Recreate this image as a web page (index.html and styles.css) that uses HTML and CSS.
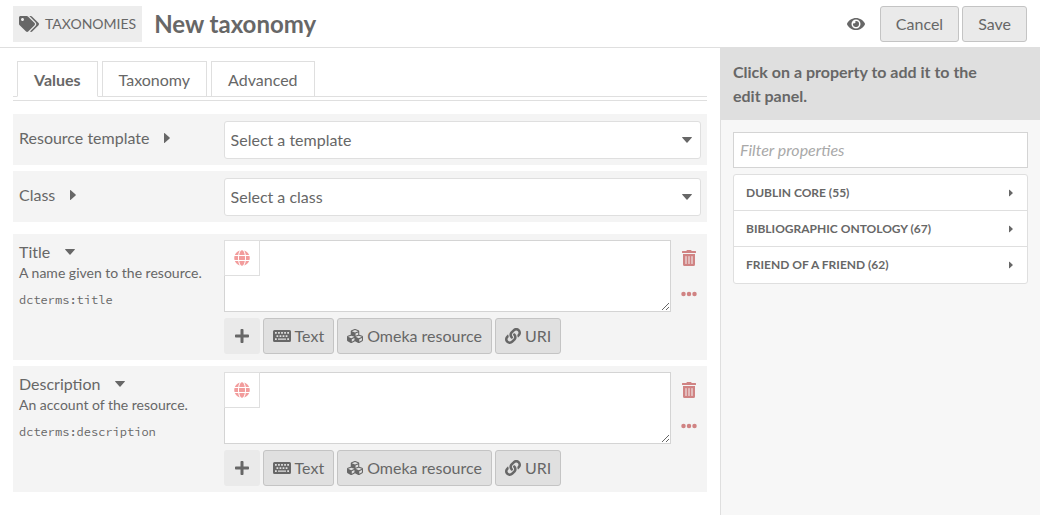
FILE: index.html
```html
<!DOCTYPE html>
<html lang="en">
<head>
<meta charset="utf-8">
<title>New taxonomy</title>
<meta name="viewport" content="width=device-width, initial-scale=1">
<link rel="stylesheet" href="styles.css">
</head>
<body>
<svg class="sprite" aria-hidden="true">
  <symbol id="i-tags" viewBox="0 0 640 512"><path d="M497.941 225.941L286.059 14.059A48 48 0 0 0 252.118 0H48C21.49 0 0 21.49 0 48v204.118a48 48 0 0 0 14.059 33.941l211.882 211.882c18.744 18.745 49.136 18.746 67.882 0l204.118-204.118c18.745-18.745 18.745-49.137 0-67.882zM112 160c-26.51 0-48-21.49-48-48s21.49-48 48-48 48 21.49 48 48-21.49 48-48 48zm513.941 133.823L421.823 497.941c-18.745 18.745-49.137 18.745-67.882 0l-.36-.36L527.64 323.522c16.999-16.999 26.36-39.6 26.36-63.64s-9.362-46.641-26.36-63.64L331.397 0h48.721a48 48 0 0 1 33.941 14.059l211.882 211.882c18.745 18.745 18.745 49.137 0 67.882z"/></symbol>
  <symbol id="i-eye" viewBox="0 0 576 512"><path d="M572.52 241.4C518.29 135.59 410.93 64 288 64S57.68 135.64 3.48 241.41a32.35 32.35 0 0 0 0 29.19C57.71 376.41 165.07 448 288 448s230.32-71.64 284.52-177.41a32.35 32.35 0 0 0 0-29.19zM288 400a144 144 0 1 1 144-144 143.93 143.93 0 0 1-144 144zm0-240a95.31 95.31 0 0 0-25.31 3.79 47.85 47.85 0 0 1-66.9 66.9A95.78 95.78 0 1 0 288 160z"/></symbol>
  <symbol id="i-globe" viewBox="0 0 496 512"><path d="M336.5 160C322 70.7 287.8 8 248 8s-74 62.7-88.5 152h177zM152 256c0 22.2 1.2 43.5 3.3 64h185.3c2.1-20.5 3.3-41.8 3.3-64s-1.2-43.5-3.3-64H155.3c-2.1 20.5-3.3 41.8-3.3 64zm324.7-96c-28.6-67.9-86.5-120.4-158-141.6 24.4 33.8 41.2 84.7 50 141.6h108zM177.2 18.4C105.8 39.6 47.8 92.1 19.3 160h108c8.7-56.9 25.5-107.8 49.9-141.6zM487.4 192H372.7c2.1 21 3.3 42.5 3.3 64s-1.2 43-3.3 64h114.6c5.5-20.5 8.6-41.8 8.6-64s-3.1-43.5-8.5-64zM120 256c0-21.5 1.2-43 3.3-64H8.6C3.2 212.5 0 233.8 0 256s3.2 43.5 8.6 64h114.6c-2-21-3.2-42.5-3.2-64zm39.5 96c14.5 89.3 48.7 152 88.5 152s74-62.7 88.5-152h-177zm159.3 141.6c71.4-21.2 129.4-73.7 158-141.6h-108c-8.8 56.9-25.6 107.8-50 141.6zM19.3 352c28.6 67.9 86.5 120.4 158 141.6-24.4-33.8-41.2-84.7-50-141.6h-108z"/></symbol>
  <symbol id="i-link" viewBox="0 0 512 512"><path d="M326.612 185.391c59.747 59.809 58.927 155.698.36 214.59-.11.12-.24.25-.36.37l-67.2 67.2c-59.27 59.27-155.699 59.262-214.96 0-59.27-59.26-59.27-155.7 0-214.96l37.106-37.106c9.84-9.84 26.786-3.3 27.294 10.606.648 17.722 3.826 35.527 9.69 52.721 1.986 5.822.567 12.262-3.783 16.612l-13.087 13.087c-28.026 28.026-28.905 73.66-1.155 101.96 28.024 28.579 74.086 28.749 102.325.51l67.2-67.19c28.191-28.191 28.073-73.757 0-101.83-3.701-3.694-7.429-6.564-10.341-8.569a16.037 16.037 0 0 1-6.947-12.606c-.396-10.567 3.348-21.456 11.698-29.806l21.054-21.055c5.521-5.521 14.182-6.199 20.584-1.731a152.482 152.482 0 0 1 20.522 17.197zM467.547 44.449c-59.261-59.262-155.69-59.27-214.96 0l-67.2 67.2c-.12.12-.25.25-.36.37-58.566 58.892-59.387 154.781.36 214.59a152.454 152.454 0 0 0 20.521 17.196c6.402 4.468 15.064 3.789 20.584-1.731l21.054-21.055c8.35-8.35 12.094-19.239 11.698-29.806a16.037 16.037 0 0 0-6.947-12.606c-2.912-2.005-6.64-4.875-10.341-8.569-28.073-28.073-28.191-73.639 0-101.83l67.2-67.19c28.239-28.239 74.3-28.069 102.325.51 27.75 28.3 26.872 73.934-1.155 101.96l-13.087 13.087c-4.35 4.35-5.769 10.79-3.783 16.612 5.864 17.194 9.042 34.999 9.69 52.721.509 13.906 17.454 20.446 27.294 10.606l37.106-37.106c59.271-59.259 59.271-155.699.001-214.959z"/></symbol>
  <symbol id="i-cubes" viewBox="0 0 512 512"><path d="M488.6 250.2L392 214V105.5c0-15-9.3-28.4-23.4-33.7l-100-37.5c-8.1-3.1-17.1-3.1-25.3 0l-100 37.5c-14.1 5.3-23.4 18.7-23.4 33.7V214l-96.6 36.2C9.3 255.5 0 268.9 0 283.9V394c0 13.6 7.7 26.1 19.9 32.2l100 50c10.1 5.1 22.1 5.1 32.2 0l103.9-52 103.9 52c10.1 5.1 22.1 5.1 32.2 0l100-50c12.2-6.1 19.9-18.6 19.9-32.2V283.9c0-15-9.3-28.4-23.4-33.7zM358 214.8l-85 31.9v-68.2l85-37v73.3zM154 104.1l102-38.2 102 38.2v.6l-102 41.4-102-41.4v-.6zm84 291.1l-85 42.5v-79.1l85-38.8v75.4zm0-112l-102 41.4-102-41.4v-.6l102-38.2 102 38.2v.6zm240 112l-85 42.5v-79.1l85-38.8v75.4zm0-112l-102 41.4-102-41.4v-.6l102-38.2 102 38.2v.6z"/></symbol>
  <symbol id="i-keyboard" viewBox="0 0 576 512"><path fill-rule="evenodd" d="M48 64H528a48 48 0 0 1 48 48V400a48 48 0 0 1-48 48H48a48 48 0 0 1-48-48V112a48 48 0 0 1 48-48zM64 128v56h56v-56zM162 128v56h56v-56zM260 128v56h56v-56zM358 128v56h56v-56zM456 128v56h56v-56zM112 228v56h56v-56zM210 228v56h56v-56zM308 228v56h56v-56zM406 228v56h56v-56zM64 328v56h56v-56zM160 336v40h256v-40zM456 328v56h56v-56z"/></symbol>
  <symbol id="i-trash" viewBox="0 0 448 512"><path d="M32 464a48 48 0 0 0 48 48h288a48 48 0 0 0 48-48V128H32zm272-256a16 16 0 0 1 32 0v224a16 16 0 0 1-32 0zm-96 0a16 16 0 0 1 32 0v224a16 16 0 0 1-32 0zm-96 0a16 16 0 0 1 32 0v224a16 16 0 0 1-32 0zM432 32H312l-9.4-18.7A24 24 0 0 0 281.1 0H166.8a23.72 23.72 0 0 0-21.4 13.3L136 32H16A16 16 0 0 0 0 48v32a16 16 0 0 0 16 16h416a16 16 0 0 0 16-16V48a16 16 0 0 0-16-16z"/></symbol>
  <symbol id="i-dots" viewBox="0 0 512 512"><circle cx="80" cy="256" r="72"/><circle cx="256" cy="256" r="72"/><circle cx="432" cy="256" r="72"/></symbol>
  <symbol id="i-plus" viewBox="0 0 448 512"><path d="M416 208H272V64c0-17.67-14.33-32-32-32h-32c-17.67 0-32 14.33-32 32v144H32c-17.67 0-32 14.33-32 32v32c0 17.67 14.33 32 32 32h144v144c0 17.67 14.33 32 32 32h32c17.67 0 32-14.33 32-32V304h144c17.67 0 32-14.33 32-32v-32c0-17.67-14.33-32-32-32z"/></symbol>
  <symbol id="i-right" viewBox="0 0 6 10"><path d="M0 .6Q0-.4.8.3L5.6 4.5Q6.100 5 5.600 5.500L.8 9.700Q0 10.400 0 9.400z"/></symbol>
  <symbol id="i-down" viewBox="0 0 10 6"><path d="M.6 0Q-.4 0 .3.8L4.500 5.600Q5 6.100 5.500 5.600L9.700.8Q10.400 0 9.400 0z"/></symbol>
</svg>

<header class="topbar">
  <a class="crumb" href="#taxonomies"><svg class="icon w20"><use href="#i-tags"/></svg>Taxonomies</a>
  <h1 class="page-title">New taxonomy</h1>
  <div class="page-actions">
    <button class="bare" type="button" aria-label="Visibility"><svg class="icon w18"><use href="#i-eye"/></svg></button>
    <button class="button" type="button">Cancel</button>
    <button class="button" type="submit">Save</button>
  </div>
</header>

<div class="layout">
  <main class="content">
    <nav class="tabs">
      <a class="tab active" href="#values">Values</a>
      <a class="tab" href="#taxonomy">Taxonomy</a>
      <a class="tab" href="#advanced">Advanced</a>
    </nav>

    <section class="fields">
      <div class="field">
        <div class="meta single">
          <label for="template">Resource template</label>
          <button class="toggle" type="button" aria-label="About resource template"><svg class="caret-right"><use href="#i-right"/></svg></button>
        </div>
        <div class="select">
          <select id="template"><option>Select a template</option></select>
          <svg class="select-caret"><use href="#i-down"/></svg>
        </div>
      </div>
      <div class="field">
        <div class="meta single">
          <label for="class">Class</label>
          <button class="toggle" type="button" aria-label="About class"><svg class="caret-right"><use href="#i-right"/></svg></button>
        </div>
        <div class="select">
          <select id="class"><option>Select a class</option></select>
          <svg class="select-caret"><use href="#i-down"/></svg>
        </div>
      </div>
    </section>

    <section class="fields">
      <div class="field">
        <div class="meta">
          <div class="meta-head">
            <label for="title">Title</label>
            <button class="toggle" type="button" aria-label="Collapse title"><svg class="caret-down"><use href="#i-down"/></svg></button>
          </div>
          <p class="comment">A name given to the resource.</p>
          <p class="term">dcterms:title</p>
        </div>
        <div class="inputs">
          <div class="value">
            <div class="editor">
              <textarea id="title"></textarea>
              <button class="language" type="button" aria-label="Set language"><svg class="icon w16"><use href="#i-globe"/></svg></button>
            </div>
            <div class="value-actions">
              <button class="bare" type="button" aria-label="Remove value"><svg class="icon w16"><use href="#i-trash"/></svg></button>
              <button class="bare" type="button" aria-label="More actions"><svg class="icon w16"><use href="#i-dots"/></svg></button>
            </div>
          </div>
          <div class="add-values">
            <button class="plus" type="button" aria-label="Add value"><svg class="icon w16"><use href="#i-plus"/></svg></button>
            <button class="button add" type="button"><svg class="icon w18"><use href="#i-keyboard"/></svg>Text</button>
            <button class="button add" type="button"><svg class="icon w16"><use href="#i-cubes"/></svg>Omeka resource</button>
            <button class="button add" type="button"><svg class="icon w16"><use href="#i-link"/></svg>URI</button>
          </div>
        </div>
      </div>
      <div class="field">
        <div class="meta">
          <div class="meta-head">
            <label for="description">Description</label>
            <button class="toggle" type="button" aria-label="Collapse description"><svg class="caret-down"><use href="#i-down"/></svg></button>
          </div>
          <p class="comment">An account of the resource.</p>
          <p class="term">dcterms:description</p>
        </div>
        <div class="inputs">
          <div class="value">
            <div class="editor">
              <textarea id="description"></textarea>
              <button class="language" type="button" aria-label="Set language"><svg class="icon w16"><use href="#i-globe"/></svg></button>
            </div>
            <div class="value-actions">
              <button class="bare" type="button" aria-label="Remove value"><svg class="icon w16"><use href="#i-trash"/></svg></button>
              <button class="bare" type="button" aria-label="More actions"><svg class="icon w16"><use href="#i-dots"/></svg></button>
            </div>
          </div>
          <div class="add-values">
            <button class="plus" type="button" aria-label="Add value"><svg class="icon w16"><use href="#i-plus"/></svg></button>
            <button class="button add" type="button"><svg class="icon w18"><use href="#i-keyboard"/></svg>Text</button>
            <button class="button add" type="button"><svg class="icon w16"><use href="#i-cubes"/></svg>Omeka resource</button>
            <button class="button add" type="button"><svg class="icon w16"><use href="#i-link"/></svg>URI</button>
          </div>
        </div>
      </div>
    </section>
  </main>

  <aside class="sidebar">
    <h2 class="sidebar-title">Click on a property to add it to the edit panel.</h2>
    <div class="sidebar-body">
      <input class="filter" type="text" placeholder="Filter properties" aria-label="Filter properties">
      <ul class="vocabularies">
        <li><button type="button">Dublin Core (55)<svg class="caret-small"><use href="#i-right"/></svg></button></li>
        <li><button type="button">Bibliographic Ontology (67)<svg class="caret-small"><use href="#i-right"/></svg></button></li>
        <li><button type="button">Friend of a Friend (62)<svg class="caret-small"><use href="#i-right"/></svg></button></li>
      </ul>
    </div>
  </aside>
</div>
</body>
</html>
```

FILE: styles.css
```css
*, *::before, *::after {
  box-sizing: border-box;
}

body {
  margin: 0;
  min-height: 100vh;
  display: flex;
  flex-direction: column;
  background: #fff;
  color: #676767;
  font: 16px/24px Lato, "Open Sans", sans-serif;
}

h1, h2, p, ul {
  margin: 0;
  padding: 0;
}

a {
  color: inherit;
  text-decoration: none;
}

button, input, select, textarea {
  margin: 0;
  color: inherit;
  font: inherit;
}

button {
  display: inline-flex;
  align-items: center;
  justify-content: center;
  border: 0;
  padding: 0;
  background: transparent;
  cursor: pointer;
}

svg {
  flex: none;
  display: block;
  fill: currentColor;
}

.sprite {
  position: absolute;
  width: 0;
  height: 0;
}

.icon { height: 16px; }
.w16 { width: 16px; }
.w18 { width: 18px; }
.w20 { width: 20px; }

.topbar {
  display: flex;
  align-items: center;
  gap: 12px;
  padding: 6px 13px 5px;
  border-bottom: 1px solid #dfdfdf;
}

.crumb {
  display: flex;
  align-items: center;
  gap: 6px;
  height: 36px;
  padding: 0 6px;
  background: #ededed;
  font-size: 14px;
  text-transform: uppercase;
}

.page-title {
  font-size: 24px;
  line-height: 36px;
}

.page-actions {
  display: flex;
  gap: 3px;
  margin-left: auto;
}

.bare {
  width: 36px;
  height: 36px;
}

.page-actions .bare {
  margin-right: 3px;
}

.button {
  height: 36px;
  padding: 0 15px;
  border: 1px solid #c4c4c4;
  border-radius: 3px;
  background: #eaeaea;
}

.layout {
  flex: 1;
  display: grid;
  grid-template-columns: 9fr 4fr;
}

.content {
  min-width: 0;
  padding: 13px;
}

.tabs {
  display: flex;
  gap: 4px;
  padding: 0 4px;
  border-bottom: 1px solid #dfdfdf;
}

.tab {
  margin-bottom: -1px;
  padding: 6px 16px 4px;
  border: 1px solid #dfdfdf;
  background: #fff;
}

.tab.active {
  border-bottom-color: #fff;
  font-weight: bold;
}

.tabs + .fields {
  margin-top: 3px;
  padding-top: 13px;
  border-top: 1px solid #dfdfdf;
}

.fields {
  display: grid;
  gap: 6px;
}

.fields + .fields {
  margin-top: 12px;
}

.field {
  display: grid;
  grid-template-columns: 3fr 7fr;
  padding: 6px;
  background: #f4f4f4;
}

.meta-head, .single {
  display: flex;
  align-items: center;
}

.single {
  align-self: start;
  height: 36px;
}

.toggle {
  width: 10px;
  height: 24px;
  margin-left: 15px;
}

.single .toggle {
  width: 6px;
}

.caret-right { width: 6px; height: 10px; }
.caret-small { width: 4px; height: 8px; }
.caret-down, .select-caret { width: 10px; height: 6px; }

.comment {
  font-size: 14px;
  line-height: 18px;
}

.term {
  margin-top: 9px;
  font: 12px/18px "Source Code Pro", "Liberation Mono", monospace;
}

.select {
  position: relative;
  margin-top: 1px;
}

.select select {
  appearance: none;
  display: block;
  width: 100%;
  height: 38px;
  padding: 0 30px 0 6px;
  border: 1px solid #dfdfdf;
  border-radius: 3px;
  background: #fff;
}

.select-caret {
  position: absolute;
  top: 16px;
  right: 9px;
  pointer-events: none;
}

.value {
  display: flex;
  margin-right: -6px;
}

.editor {
  position: relative;
  flex: 1;
}

.editor textarea {
  display: block;
  width: 100%;
  height: 72px;
  padding: 5px 5px 5px 42px;
  border: 1px solid #d4d4d4;
  border-radius: 0;
  background: #fff;
  resize: vertical;
}

.language {
  position: absolute;
  top: 0;
  left: 0;
  width: 36px;
  height: 36px;
  border: 1px solid #dfdfdf;
  color: #f29c9c;
}

.value-actions {
  display: flex;
  flex-direction: column;
  color: #d08383;
}

.add-values {
  display: flex;
  flex-wrap: wrap;
  gap: 3px;
  margin-top: 6px;
}

.plus {
  width: 36px;
  height: 36px;
  border-radius: 3px;
  background: #eaeaea;
}

.add {
  gap: 4px;
  padding: 0 9px;
  background: #e0e0e0;
}

.sidebar {
  border-left: 1px solid #dfdfdf;
  background: #f7f7f7;
}

.sidebar-title {
  padding: 12px 48px 12px 12px;
  background: #dfdfdf;
  font-size: 16px;
  line-height: 24px;
}

.sidebar-body {
  padding: 12px;
}

.filter {
  display: block;
  width: 100%;
  height: 36px;
  padding: 0 6px 2px;
  border: 1px solid #d4d4d4;
  border-radius: 0;
  background: #fff;
}

.filter::placeholder {
  color: #a9a9a9;
  font-style: italic;
  opacity: 1;
}

.vocabularies {
  margin-top: 6px;
  padding-bottom: 1px;
  border: 1px solid #dfdfdf;
  border-radius: 3px;
  background: #fff;
  list-style: none;
}

.vocabularies li + li {
  border-top: 1px solid #dfdfdf;
}

.vocabularies button {
  width: 100%;
  justify-content: space-between;
  padding: 6px 14px 6px 12px;
  font-size: 12px;
  font-weight: bold;
  line-height: 23px;
  text-transform: uppercase;
}

.vocabularies li {
  display: flex;
}
```
